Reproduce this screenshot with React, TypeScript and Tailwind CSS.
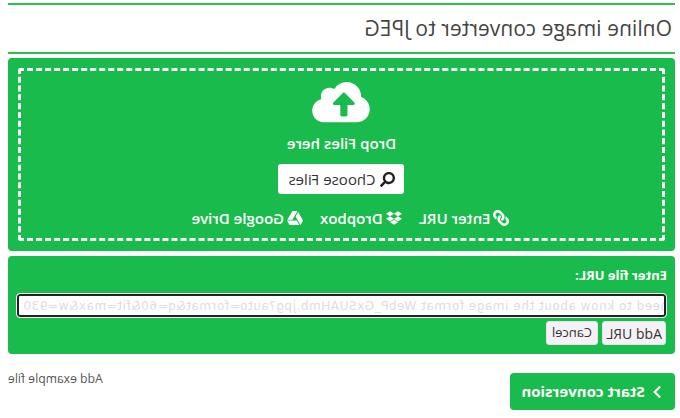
import { FaChevronRight, FaCloudUploadAlt, FaDropbox, FaGoogleDrive, FaLink, FaSearch } from 'react-icons/fa';

const green = 'bg-[#19bc4c]';

export default function App() {
    return (
        <div className="w-[680px] h-[418px] overflow-hidden bg-white -scale-x-100 font-['Open_Sans',sans-serif] text-[#444]">
            <div className="pl-[5px] pr-[8px] pt-[3px]">
                {/* Title */}
                <div className="border-y-2 border-[#2fbf4f] h-[51px] flex items-center pl-[3px]">
                    <h1 className="text-[21px] leading-none tracking-[0.07px] text-[#444] mb-[1px]">Online image converter to JPEG</h1>
                </div>

                {/* Upload panel */}
                <div className={`${green} mt-[4px] h-[193px] rounded-[4px] p-[10px]`}>
                    <div className="h-full border-[3px] border-dashed border-white rounded-[3px] flex flex-col items-center text-white">
                        <FaCloudUploadAlt className="w-[58px] h-[46px] mt-[8px]" />
                        <div className="text-[15px] font-semibold leading-none mt-[11px]">Drop Files here</div>
                        <div className="mt-[13px] h-[30px] w-[126px] bg-white rounded-[3px] text-[#333] text-[15px] flex items-center justify-center gap-[4px]">
                            <FaSearch className="w-[15px] h-[15px] text-[#222]" />
                            Choose Files
                        </div>
                        <div className="mt-[16px] pr-[18px] flex items-center gap-[17px] text-[15px] font-semibold leading-none">
                            <span className="flex items-center gap-[3px]"><FaLink className="w-[16px] h-[16px]" />Enter URL</span>
                            <span className="flex items-center gap-[3px]"><FaDropbox className="w-[16px] h-[16px]" />Dropbox</span>
                            <span className="flex items-center gap-[3px]"><FaGoogleDrive className="w-[16px] h-[16px]" />Google Drive</span>
                        </div>
                    </div>
                </div>

                {/* URL panel */}
                <div className={`${green} mt-[5px] h-[98px] rounded-[4px] px-[9px] pt-[11px]`}>
                    <div className="text-[13px] font-bold text-white leading-[16px] ml-[-1px]">Enter file URL:</div>
                    <div className="mt-[11px] h-[23px] bg-white border-2 border-[#222] outline outline-1 outline-white rounded-[3px] overflow-hidden flex items-center justify-end px-[4px] text-[12px] tracking-[0.55px] text-[#e2dae2] whitespace-nowrap font-['DejaVu_Sans',sans-serif]">
                        need to know about the image format WebP_GxSUAHmb.jpg?auto=format&amp;q=60&amp;fit=max&amp;w=930
                    </div>
                    <div className="mt-[4px] flex gap-[4px]">
                        <div className="w-[64px] h-[24px] bg-[#f6f1f6] border border-[#e4e0e4] rounded-[3px] text-[14px] text-[#333] flex items-center justify-center">Add URL</div>
                        <div className="w-[52px] h-[24px] bg-[#f6f1f6] border border-[#e4e0e4] rounded-[3px] text-[13px] text-[#333] flex items-center justify-center">Cancel</div>
                    </div>
                </div>

                {/* Footer */}
                <div className="mt-[19px] flex items-start justify-between">
                    <div className={`${green} w-[165px] h-[37px] rounded-[4px] text-white text-[15px] font-bold flex items-center justify-center gap-[5px]`}>
                        <FaChevronRight className="w-[14px] h-[14px]" />
                        Start conversion
                    </div>
                    <div className="text-[12.2px] leading-none text-[#555]">Add example file</div>
                </div>
            </div>
        </div>
    );
}
